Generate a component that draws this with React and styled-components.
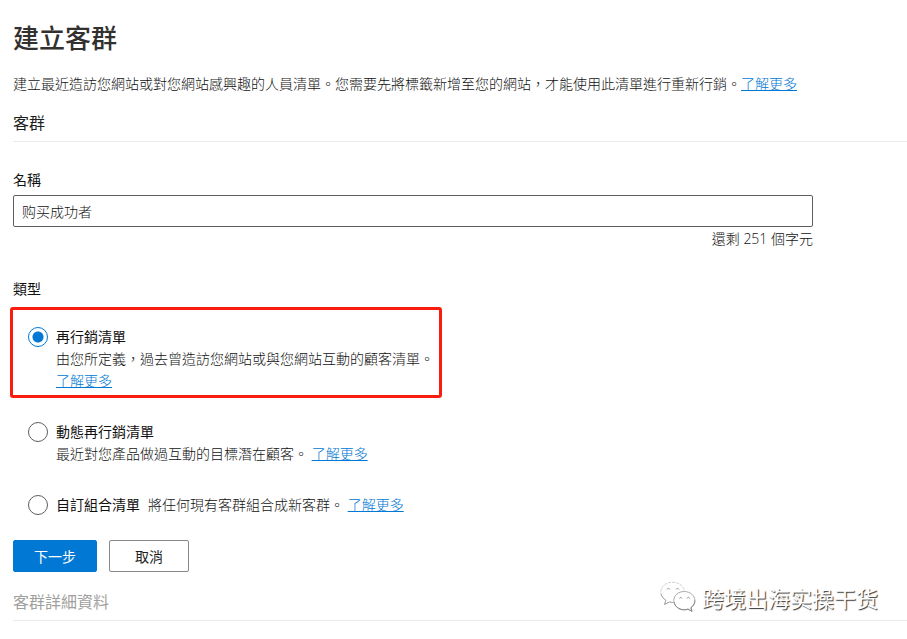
import React, { useState } from "react";
import styled, { createGlobalStyle } from "styled-components";

const MAX_LENGTH = 256;

const options = [
  {
    id: "remarketing",
    title: "再行銷清單",
    text: "由您所定義，過去曾造訪您網站或與您網站互動的顧客清單。",
    highlighted: true,
  },
  {
    id: "dynamic",
    title: "動態再行銷清單",
    text: "最近對您產品做過互動的目標潛在顧客。",
  },
  {
    id: "combined",
    title: "自訂組合清單",
    text: "將任何現有客群組合成新客群。",
    inline: true,
  },
];

const App = () => {
  const [name, setName] = useState("购买成功者");
  const [type, setType] = useState("remarketing");

  return (
    <Page>
      <GlobalStyle />
      <Title>建立客群</Title>
      <Description>
        建立最近造訪您網站或對您網站感興趣的人員清單。您需要先將標籤新增至您的網站，才能使用此清單進行重新行銷。
        <Link href="#learn">了解更多</Link>
      </Description>
      <SectionTitle>客群</SectionTitle>

      <form onSubmit={(e) => e.preventDefault()}>
        <Field>
          <Label htmlFor="name">名稱</Label>
          <TextInput
            id="name"
            lang="zh-CN"
            value={name}
            maxLength={MAX_LENGTH}
            onChange={(e) => setName(e.target.value)}
          />
          <Counter>還剩 {MAX_LENGTH - name.length} 個字元</Counter>
        </Field>

        <TypeGroup>
          <Legend>類型</Legend>
          {options.map((option) => (
            <Option key={option.id} $highlighted={option.highlighted}>
              <Radio
                type="radio"
                name="type"
                id={option.id}
                checked={type === option.id}
                onChange={() => setType(option.id)}
              />
              <OptionBody $inline={option.inline}>
                <OptionTitle htmlFor={option.id}>{option.title}</OptionTitle>
                <span>
                  {option.text} <Link href={`#${option.id}`}>了解更多</Link>
                </span>
              </OptionBody>
            </Option>
          ))}
        </TypeGroup>

        <Actions>
          <Button type="submit" $primary>下一步</Button>
          <Button type="button">取消</Button>
        </Actions>
      </form>

      <SectionTitle $muted>客群詳細資料</SectionTitle>

      <Watermark>
        <WeChatIcon />
        <span>跨境出海实操干货</span>
      </Watermark>
    </Page>
  );
};

const WeChatIcon = () => (
  <svg width="36" height="32" viewBox="0 0 36 32" fill="none" aria-hidden="true">
    <path
      d="M13 21.5c-1.400 0-2.300-.2-3.500-.6L4.500 23.500l1.300-4.200C2.500 17 .8 14.300.8 11.200.8 5.500 6 1.200 12.500 1.200c6 0 11 3.700 12 8.700"
      stroke="#d0d0d0"
      strokeDasharray="3 1"
    />
    <path d="M1 13c.6 2.500 2.300 4.700 4.800 6.300L4.500 23.500l5-2.600c1.200.4 2.100.6 3.500.6" stroke="#a5a5a5" />
    <path
      d="M24.200 10.500c-5.800 0-10.400 4-10.400 9s4.600 9.300 10.400 9.300c1.300 0 2.600-.3 3.800-.7l4 2.200-1.100-3.600c2.400-1.800 4-4.200 4-7.200 0-5-4.900-9-10.700-9z"
      fill="#fff"
      stroke="#aaa"
    />
    <path d="M14 21c.8 4.400 5 7.800 10.200 7.800 1.300 0 2.600-.3 3.800-.7l4 2.200-1.100-3.600c2.400-1.800 4-4.200 4-7.200" stroke="#888" />
    <path d="M7 8.500c.3-1.500 2.600-1.500 3 0M16 8.500c.3-1.500 2.600-1.500 3 0M19.500 17.500c.3-1.400 2.300-1.400 2.600 0M27 17.500c.3-1.400 2.300-1.400 2.600 0" stroke="#999" />
  </svg>
);

const GlobalStyle = createGlobalStyle`
  * {
    box-sizing: border-box;
  }

  body {
    margin: 0;
    background: #fff;
    color: #111;
    font-family: "Open Sans", "Noto Sans CJK TC", sans-serif;
    font-size: 14px;
    font-weight: 300;
    line-height: 22px;
  }
`;

const Page = styled.main`
  position: relative;
  padding: 20px 0 18px 13px;
`;

const Title = styled.h1`
  margin: 0;
  color: #323130;
  font-size: 26px;
  font-weight: 500;
  line-height: 36px;
`;

const Description = styled.p`
  margin: 17px 0 16px;
`;

const Link = styled.a`
  color: #0078d4;
  text-decoration: underline;
`;

const SectionTitle = styled.h2`
  margin: 0;
  padding-bottom: 6px;
  border-bottom: 1px solid #eaeaea;
  color: ${(props) => (props.$muted ? "#a19f9d" : "#201f1e")};
  font-size: 16px;
  font-weight: 400;
  line-height: 24px;
`;

const Field = styled.div`
  display: flex;
  flex-direction: column;
  width: calc(100% - 94px);
  max-width: 800px;
  margin-top: 27px;
`;

const Label = styled.label`
  font-weight: 400;
`;

const TextInput = styled.input`
  height: 32px;
  margin-top: 4px;
  padding: 0 8px;
  border: 1px solid #605e5c;
  border-radius: 2px;
  color: #111;
  font-family: "Open Sans", "Noto Sans CJK SC", sans-serif;
  font-size: 14px;
  font-weight: 300;
`;

const Counter = styled.div`
  margin-top: 1px;
  text-align: right;
`;

const TypeGroup = styled.fieldset`
  min-width: 0;
  margin: 28px 0 0;
  padding: 0;
  border: none;
`;

const Legend = styled.legend`
  margin-bottom: 7px;
  padding: 0;
  font-weight: 400;
`;

const Option = styled.div`
  display: flex;
  gap: 8px;
  width: ${(props) => (props.$highlighted ? "432px" : "auto")};
  max-width: 100%;
  margin: ${(props) => (props.$highlighted ? "0 0 23px -3px" : "0 0 29px")};
  padding: ${(props) => (props.$highlighted ? "16px 0 3px 15px" : "0 0 0 15px")};
  border: ${(props) => (props.$highlighted ? "3px solid #fb1c10" : "none")};
  border-radius: 3px;

  &:last-child {
    margin-bottom: 24px;
  }
`;

const Radio = styled.input`
  appearance: none;
  flex: none;
  width: 20px;
  height: 20px;
  margin: 1px 0;
  border: 1px solid #605e5c;
  border-radius: 50%;
  background: #fff;

  &:checked {
    border-color: #0078d4;
    background: radial-gradient(circle, #0078d4 5px, #fff 6px);
  }
`;

const OptionBody = styled.div`
  display: flex;
  flex-direction: ${(props) => (props.$inline ? "row" : "column")};
  gap: ${(props) => (props.$inline ? "8px" : "0")};
`;

const OptionTitle = styled.label`
  font-weight: 400;
`;

const Actions = styled.div`
  display: flex;
  gap: 12px;
  margin-bottom: 18px;
`;

const Button = styled.button`
  height: 32px;
  min-width: 80px;
  padding: 0 20px;
  border: 1px solid ${(props) => (props.$primary ? "#0078d4" : "#8a8886")};
  border-radius: 2px;
  background: ${(props) => (props.$primary ? "#0078d4" : "#fff")};
  color: ${(props) => (props.$primary ? "#fff" : "#201f1e")};
  font-family: inherit;
  font-size: 14px;
  font-weight: 400;
  cursor: pointer;
`;

const Watermark = styled.div`
  position: absolute;
  right: 29px;
  bottom: 26px;
  display: flex;
  align-items: center;
  gap: 6px;
  color: #fff;
  font-family: "Noto Sans CJK SC", sans-serif;
  font-size: 22px;
  font-weight: 400;
  line-height: 32px;
  text-shadow: 1px 1px 1px #333;
`;

export default App;
